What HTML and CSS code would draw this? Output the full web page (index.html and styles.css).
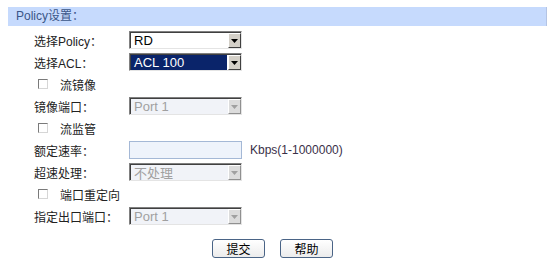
FILE: index.html
```html
<!DOCTYPE html>
<html>
<head>
<meta charset="utf-8">
<link rel="stylesheet" href="styles.css">
</head>
<body>
<div class="panel">
  <div class="bar">Policy设置：</div>
  <div class="form">
    <div class="row">
      <span class="label">选择Policy：</span>
      <div class="select"><span class="val">RD</span><span class="arrow"><svg width="7" height="4" viewBox="0 0 7 4"><path d="M0 0h7L3.5 4z" fill="#000"/></svg></span></div>
    </div>
    <div class="row">
      <span class="label">选择ACL：</span>
      <div class="select"><span class="val sel">ACL 100</span><span class="arrow"><svg width="7" height="4" viewBox="0 0 7 4"><path d="M0 0h7L3.5 4z" fill="#000"/></svg></span></div>
    </div>
    <div class="row check">
      <span class="box"></span><span class="ctext">流镜像</span>
    </div>
    <div class="row">
      <span class="label">镜像端口：</span>
      <div class="select disabled"><span class="val">Port 1</span><span class="arrow"><svg width="7" height="4" viewBox="0 0 7 4"><path d="M0 0h7L3.5 4z" fill="#a0a0a0"/></svg></span></div>
    </div>
    <div class="row check">
      <span class="box"></span><span class="ctext">流监管</span>
    </div>
    <div class="row">
      <span class="label">额定速率：</span>
      <div class="input"></div>
      <span class="unit">Kbps(1-1000000)</span>
    </div>
    <div class="row">
      <span class="label">超速处理：</span>
      <div class="select disabled"><span class="val">不处理</span><span class="arrow"><svg width="7" height="4" viewBox="0 0 7 4"><path d="M0 0h7L3.5 4z" fill="#a0a0a0"/></svg></span></div>
    </div>
    <div class="row check">
      <span class="box"></span><span class="ctext">端口重定向</span>
    </div>
    <div class="row">
      <span class="label">指定出口端口：</span>
      <div class="select disabled"><span class="val">Port 1</span><span class="arrow"><svg width="7" height="4" viewBox="0 0 7 4"><path d="M0 0h7L3.5 4z" fill="#a0a0a0"/></svg></span></div>
    </div>
  </div>
  <div class="actions">
    <button class="btn">提交</button>
    <button class="btn">帮助</button>
  </div>
</div>
</body>
</html>
```

FILE: styles.css
```css
html, body {
  margin: 0;
  padding: 0;
  background: #fff;
}
body {
  font-family: "Liberation Sans", "Noto Sans CJK SC", sans-serif;
  font-size: 12px;
  color: #222;
}
.panel {
  margin: 7px 7px 0 8px;
}
.bar {
  height: 19px;
  line-height: 19px;
  padding-left: 8px;
  background: #c6dafd;
  color: #3a5688;
  border-right: 1px solid #b4c4e4;
}
.form {
  margin-top: 3px;
  padding-left: 26px;
}
.row {
  height: 22px;
  display: flex;
  align-items: center;
}
.label {
  width: 95px;
  flex: none;
  color: #222;
}
.select {
  box-sizing: border-box;
  width: 113px;
  height: 18px;
  display: flex;
  align-items: stretch;
  background: #fff;
  border-top: 1px solid #808080;
  border-left: 1px solid #808080;
  border-right: 1px solid #e4e4e4;
  border-bottom: 1px solid #e4e4e4;
  box-shadow: inset 1px 1px 0 #404040;
  padding: 1px 0 0 1px;
}
.select .val {
  flex: 1;
  display: flex;
  align-items: center;
  padding-left: 3px;
  font-size: 13px;
  color: #000;
  margin-right: 1px;
}
.select .val.sel {
  background: #0a246a;
  color: #fff;
}
.select .arrow {
  box-sizing: border-box;
  width: 13px;
  flex: none;
  display: flex;
  align-items: center;
  justify-content: center;
  background: #d4d0c8;
  border-top: 1px solid #fff;
  border-left: 1px solid #fff;
  border-right: 1px solid #404040;
  border-bottom: 1px solid #404040;
}
.select.disabled {
  background: #f1f3f8;
}
.select.disabled .val {
  color: #a0a0a0;
}
.select.disabled .arrow {
  background: #dcdcdc;
  border-right-color: #909090;
  border-bottom-color: #909090;
}
.check .box {
  box-sizing: border-box;
  width: 10px;
  height: 10px;
  margin-left: 4px;
  border-top: 1px solid #7a7a7a;
  border-left: 1px solid #7a7a7a;
  border-right: 1px solid #d6d6d6;
  border-bottom: 1px solid #d6d6d6;
  background: #fff;
}
.check .ctext {
  margin-left: 12px;
}
.input {
  box-sizing: border-box;
  width: 113px;
  height: 18px;
  border: 1px solid #a4b8d6;
  background: #eef3fb;
}
.unit {
  margin-left: 8px;
  color: #3a3048;
}
.actions {
  margin-top: 12px;
  padding-left: 204px;
  display: flex;
  gap: 15px;
}
.btn {
  box-sizing: border-box;
  width: 53px;
  height: 19px;
  padding: 0;
  border: 1px solid #4a6486;
  border-radius: 3px;
  background: linear-gradient(#ffffff, #ececec);
  font-family: "Liberation Sans", "Noto Sans CJK SC", sans-serif;
  font-size: 12px;
  color: #000;
}
```
